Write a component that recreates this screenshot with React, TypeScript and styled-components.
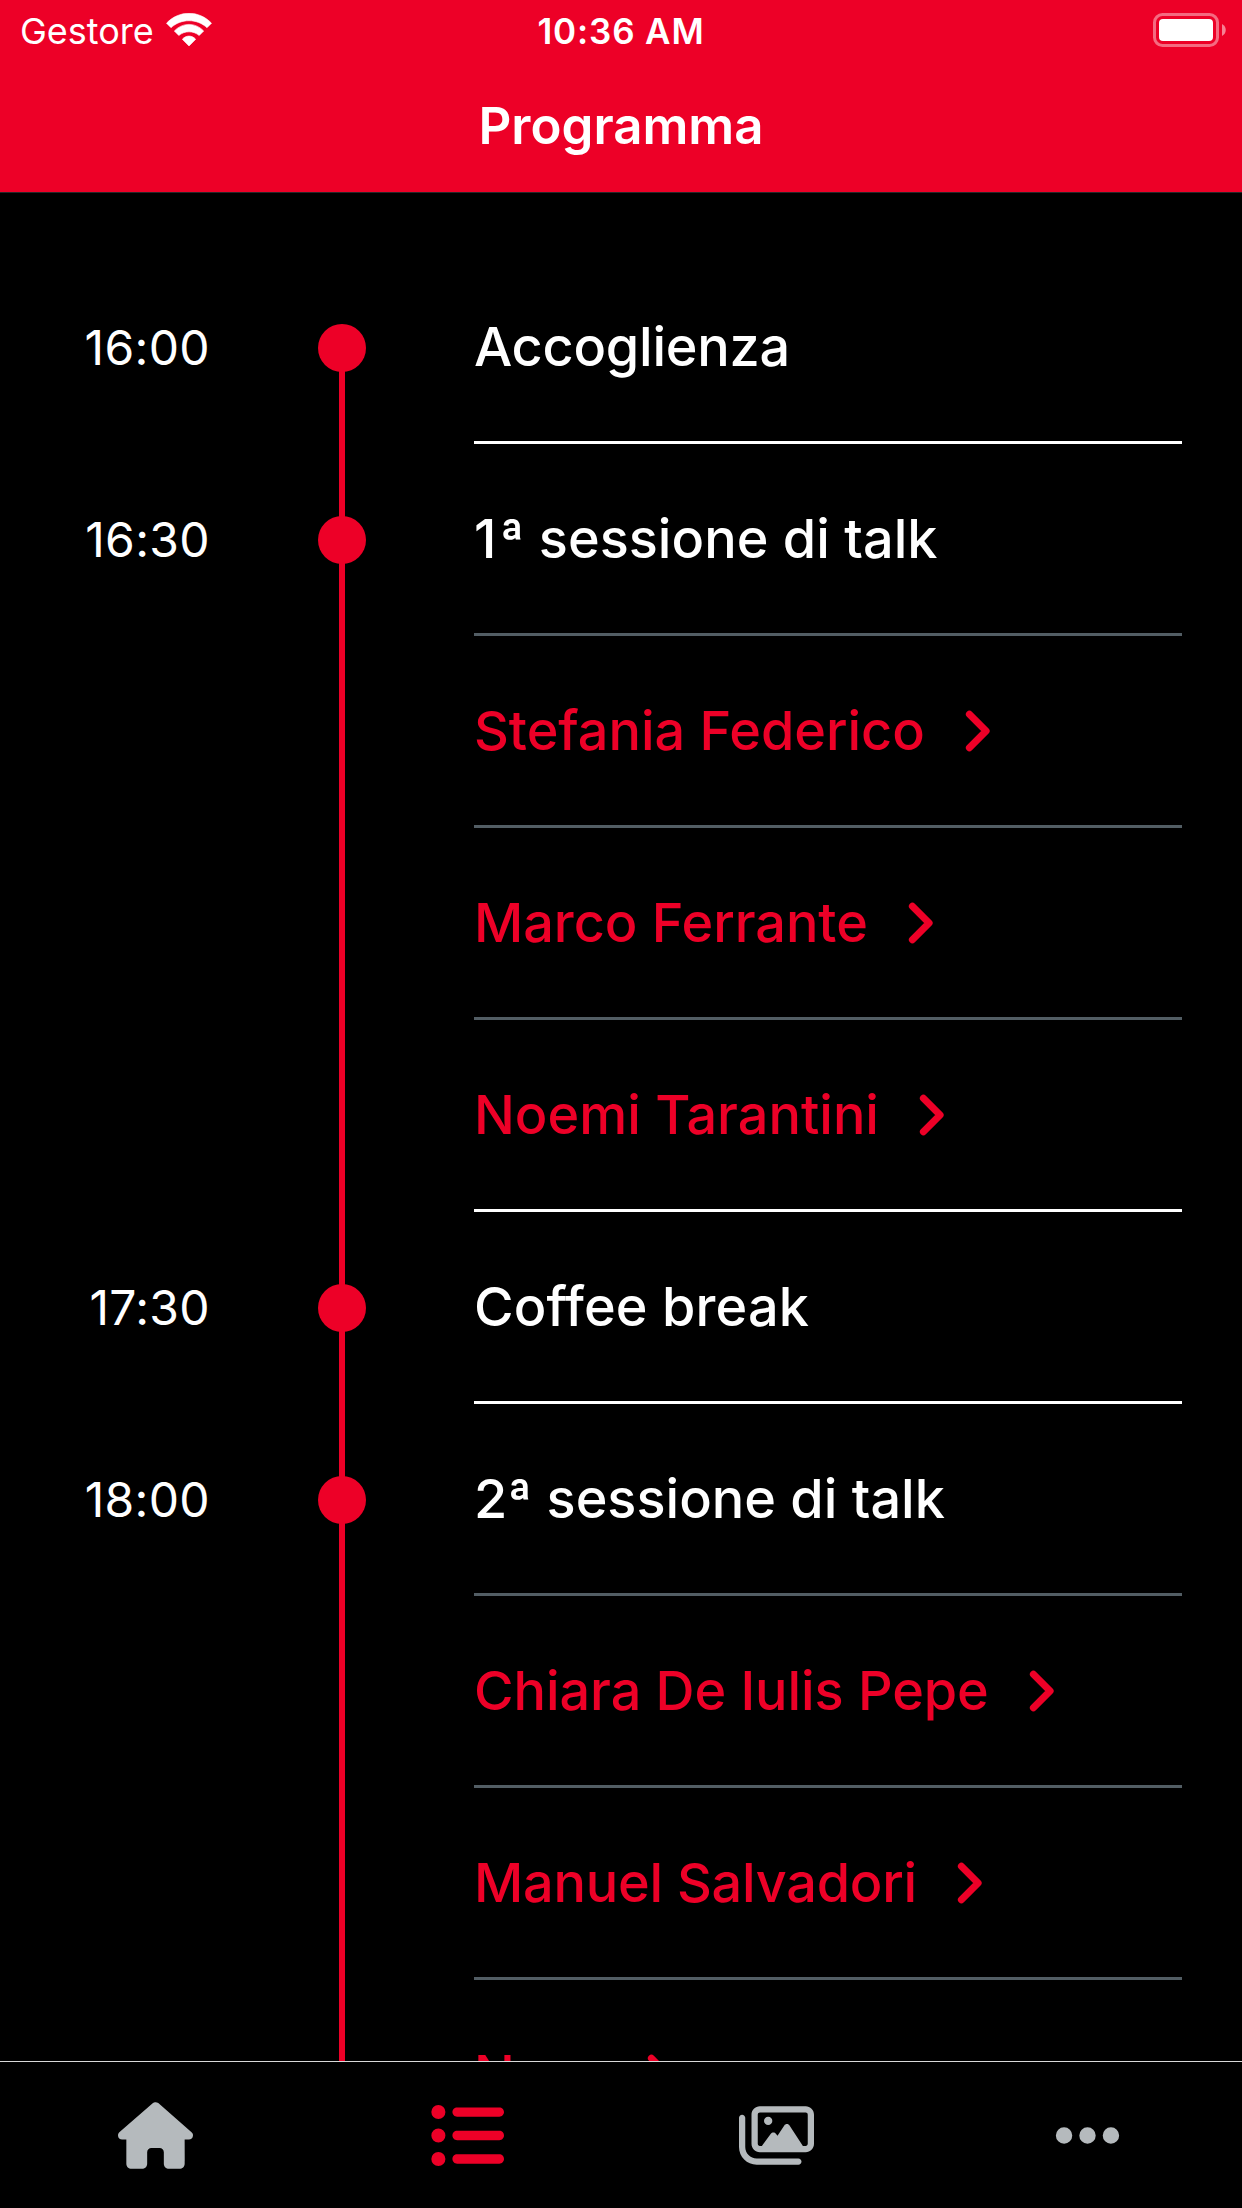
import React from 'react';
import styled, { createGlobalStyle, css } from 'styled-components';
import { FaHouse, FaListUl, FaRegImages, FaEllipsis } from 'react-icons/fa6';

const RED = '#ed0027';
const GREY = '#b5babd';

const GlobalStyle = createGlobalStyle`
  *, *::before, *::after { box-sizing: border-box; }
  body { margin: 0; background: #000; }
`;

const Screen = styled.div`
  display: flex;
  flex-direction: column;
  width: 1242px;
  height: 2208px;
  overflow: hidden;
  background: #000;
  color: #fff;
  font-family: Inter, 'Liberation Sans', sans-serif;
`;

const Header = styled.header`
  flex: none;
  height: 193px;
  background: ${RED};
  border-bottom: 1px solid #272729;
`;

const StatusBar = styled.div`
  display: grid;
  grid-template-columns: 1fr auto 1fr;
  align-items: center;
  height: 60px;
`;

const Carrier = styled.div`
  display: flex;
  align-items: center;
  gap: 12px;
  padding: 2px 0 0 20px;
  font-size: 36px;
  line-height: 44px;
`;

const Wifi = styled.svg`
  display: block;
  margin-bottom: 3px;
`;

const Clock = styled.div`
  padding-top: 2px;
  font-size: 35px;
  font-weight: 600;
  line-height: 44px;
  letter-spacing: 0.85px;
`;

const Battery = styled.svg`
  display: block;
  justify-self: end;
  margin-right: 16px;
`;

const Title = styled.h1`
  margin: 0;
  height: 132px;
  line-height: 132px;
  text-align: center;
  font-size: 51px;
  font-weight: 600;
`;

const Schedule = styled.main`
  flex: 1;
  min-height: 0;
  overflow: hidden;
  padding-top: 59px;
`;

const Row = styled.section`
  display: grid;
  grid-template-columns: 210px 264px 708px;
  height: 192px;
`;

const Time = styled.time`
  align-self: center;
  text-align: right;
  font-size: 48px;
  line-height: 60px;
  letter-spacing: 0.35px;
`;

const Rail = styled.div<{ $dot?: boolean; $start?: boolean }>`
  display: grid;
  grid-template-rows: 192px;
  align-items: center;
  padding-left: 108px;

  &::before, &::after {
    content: '';
    grid-area: 1 / 1;
    background: ${RED};
  }
  &::before {
    width: 6px;
    margin-left: 21px;
    align-self: end;
    height: ${p => (p.$start ? '96px' : '192px')};
  }
  &::after {
    width: 48px;
    height: 48px;
    border-radius: 50%;
    ${p => !p.$dot && css`visibility: hidden;`}
  }
`;

const Entry = styled.div<{ $link?: boolean; $strong?: boolean; $track?: number }>`
  display: flex;
  align-items: center;
  gap: 35px;
  border-bottom: 3px solid ${p => (p.$strong ? '#fff' : '#525d64')};
  color: ${p => (p.$link ? RED : '#fff')};
  font-size: 54px;
  font-weight: 500;
  line-height: 66px;
  letter-spacing: ${p => p.$track ?? 0}px;
  white-space: nowrap;
`;

const Ordinal = styled.span`
  letter-spacing: 3px;
`;

const ChevronIcon = styled.svg`
  display: block;
  width: 30px;
  height: 48px;
  fill: none;
  stroke: currentColor;
  stroke-width: 7;
  stroke-linecap: round;
  stroke-linejoin: round;
`;

const TabBar = styled.nav`
  flex: none;
  display: grid;
  grid-template-columns: repeat(4, 1fr);
  height: 147px;
  border-top: 1px solid #d8d8d8;
`;

const Tab = styled.a<{ $active?: boolean }>`
  display: flex;
  align-items: center;
  justify-content: center;
  color: ${p => (p.$active ? RED : GREY)};

  &:nth-child(even) { padding-left: 2px; }
  svg { width: 75px; height: 75px; }
`;

const Chevron = () => (
  <ChevronIcon viewBox="0 0 30 48">
    <path d="M9.4 7.3L26.1 24L9.4 40.7" />
  </ChevronIcon>
);

type Item = {
  id: string;
  time?: string;
  label: React.ReactNode;
  link?: boolean;
  strong?: boolean;
  track?: number;
};

const items: Item[] = [
  { id: 'welcome', time: '16:00', label: 'Accoglienza', strong: true, track: -0.24 },
  { id: 'talks-1', time: '16:30', label: <><Ordinal>1</Ordinal>ª sessione di talk</>, track: 0.03 },
  { id: 'federico', label: 'Stefania Federico', link: true, track: -0.04 },
  { id: 'ferrante', label: 'Marco Ferrante', link: true, track: -0.05 },
  { id: 'tarantini', label: 'Noemi Tarantini', link: true, strong: true },
  { id: 'coffee', time: '17:30', label: 'Coffee break', strong: true, track: 0.1 },
  { id: 'talks-2', time: '18:00', label: '2ª sessione di talk' },
  { id: 'pepe', label: 'Chiara De Iulis Pepe', link: true, track: -0.07 },
  { id: 'salvadori', label: 'Manuel Salvadori', link: true, track: -0.24 },
  { id: 'nora', label: 'Nora', link: true, track: 2 },
];

export default function App() {
  return (
    <Screen>
      <GlobalStyle />
      <Header>
        <StatusBar>
          <Carrier>
            <span>Gestore</span>
            <Wifi width="46" height="34" viewBox="0 0 46 34" fill="#fff" stroke="#fff" strokeWidth="0.6" strokeLinejoin="round">
              <path d="M0.5 10.2C13-3 33-3 45.5 10.2L41 14.7C31 5.4 15 5.4 5 14.7Z" />
              <path d="M8.3 18C16.5 9.2 29.5 9.2 37.7 18L33.2 22.5C27.3 17.6 18.7 17.6 12.8 22.5Z" />
              <path d="M16.3 26.3C20 22 26 22 29.7 26.3L23 33Z" />
            </Wifi>
          </Carrier>
          <Clock>10:36 AM</Clock>
          <Battery width="73" height="34" viewBox="0 0 73 34">
            <rect x="1.5" y="1.5" width="63" height="31" rx="8" fill="none" stroke="#fff" strokeOpacity="0.42" strokeWidth="3" />
            <rect x="6" y="6" width="54" height="22" rx="4" fill="#fff" />
            <path d="M69 11C74 13.5 74 20.5 69 23Z" fill="#fff" fillOpacity="0.5" />
          </Battery>
        </StatusBar>
        <Title>Programma</Title>
      </Header>
      <Schedule>
        {items.map((it, i) => (
          <Row key={it.id}>
            <Time>{it.time}</Time>
            <Rail $dot={!!it.time} $start={i === 0} />
            <Entry $link={it.link} $strong={it.strong} $track={it.track}>
              <span>{it.label}</span>
              {it.link && <Chevron />}
            </Entry>
          </Row>
        ))}
      </Schedule>
      <TabBar>
        <Tab><FaHouse /></Tab>
        <Tab $active><FaListUl /></Tab>
        <Tab><FaRegImages /></Tab>
        <Tab><FaEllipsis /></Tab>
      </TabBar>
    </Screen>
  );
}
